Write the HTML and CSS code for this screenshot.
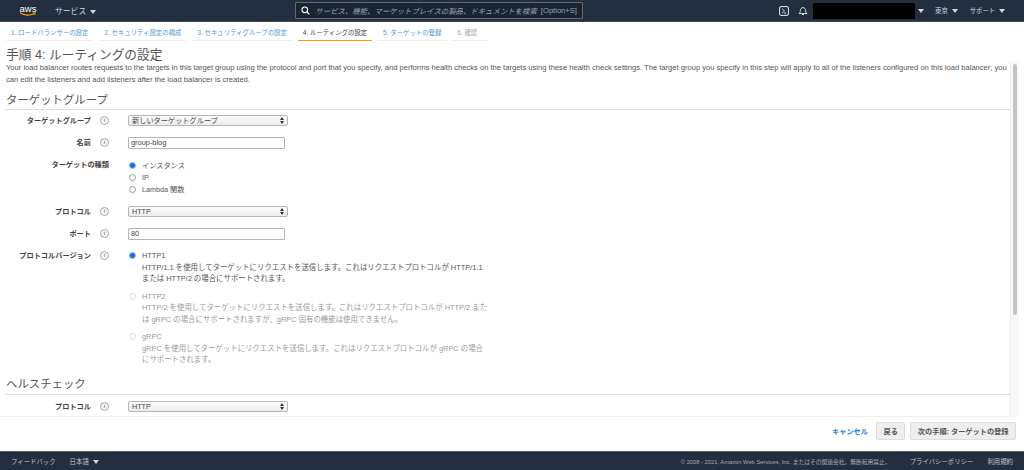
FILE: index.html
```html
<!DOCTYPE html>
<html lang="ja">
<head>
  <meta charset="UTF-8">
  <title>手順 4: ルーティングの設定</title>
  <link rel="stylesheet" href="styles.css">
</head>
<body>
  <header class="topbar">
    <div class="logo">
      <span class="logo-text">aws</span>
      <svg class="logo-smile" width="18" height="5" viewBox="0 0 18 5"><path d="M1 .8C5 3.6 11 3.9 15.6 1.4" fill="none" stroke="#f90" stroke-width="1.1"/><path d="M13.8 .8l2.6-.2-.8 2.4" fill="none" stroke="#f90" stroke-width=".9"/></svg>
    </div>
    <span class="nav-item services">サービス <i class="caret"></i></span>
    <div class="search">
      <svg width="9" height="9" viewBox="0 0 9 9"><circle cx="3.8" cy="3.8" r="2.8" fill="none" stroke="#fff" stroke-width="1.1"/><path d="M6 6l2.4 2.4" stroke="#fff" stroke-width="1.2"/></svg>
      <em>サービス、機能、マーケットプレイスの製品、ドキュメントを検索</em>
      <span>[Option+S]</span>
    </div>
    <div class="top-right">
      <svg class="shell" width="10" height="10" viewBox="0 0 10 10"><rect x=".6" y=".6" width="8.8" height="8.8" rx="1.4" fill="none" stroke="#e6e9ec" stroke-width="1"/><path d="M3 2.8L5.6 5 3 7.2M5 7.2h2.2" fill="none" stroke="#e6e9ec" stroke-width=".9"/></svg>
      <svg class="bell" width="10" height="10" viewBox="0 0 10 10"><path d="M1 7.6c1.2-.9 1.3-2 1.4-3.2C2.5 2.8 3.5 1.6 5 1.6s2.500 1.200 2.600 2.800c.1 1.200.2 2.300 1.400 3.200z" fill="none" stroke="#e6e9ec" stroke-width=".9"/><path d="M4 8.600h2" stroke="#e6e9ec" stroke-width="1"/></svg>
      <div class="account"></div>
      <i class="caret account-caret"></i>
      <span class="nav-item small region">東京 <i class="caret"></i></span>
      <span class="nav-item small">サポート <i class="caret"></i></span>
    </div>
  </header>

  <nav class="steps">
    <a class="step">1. ロードバランサーの設定</a>
    <a class="step">2. セキュリティ設定の構成</a>
    <a class="step">3. セキュリティグループの設定</a>
    <a class="step active">4. ルーティングの設定</a>
    <a class="step">5. ターゲットの登録</a>
    <a class="step disabled">6. 確認</a>
  </nav>

  <h1 class="page-title">手順 4: ルーティングの設定</h1>

  <div class="work-area">
    <main class="content">
      <p class="intro">Your load balancer routes requests to the targets in this target group using the protocol and port that you specify, and performs health checks on the targets using these health check settings. The target group you specify in this step will apply to all of the listeners configured on this load balancer; you can edit the listeners and add listeners after the load balancer is created.</p>

      <h2 class="section-title">ターゲットグループ</h2>

      <div class="row row-first">
        <label class="row-label">ターゲットグループ</label><span class="info">i</span>
        <div class="select">新しいターゲットグループ<i class="updown"></i></div>
      </div>
      <div class="row row-name">
        <label class="row-label">名前</label><span class="info">i</span>
        <div class="text-input">group-blog</div>
      </div>
      <div class="row row-types">
        <label class="row-label">ターゲットの種類</label>
        <div class="radios">
          <div class="radio-line"><i class="radio on"></i>インスタンス</div>
          <div class="radio-line"><i class="radio"></i>IP</div>
          <div class="radio-line"><i class="radio"></i>Lambda 関数</div>
        </div>
      </div>
      <div class="row row-protocol">
        <label class="row-label">プロトコル</label><span class="info">i</span>
        <div class="select">HTTP<i class="updown"></i></div>
      </div>
      <div class="row row-port">
        <label class="row-label">ポート</label><span class="info">i</span>
        <div class="text-input">80</div>
      </div>
      <div class="row row-version">
        <label class="row-label">プロトコルバージョン</label><span class="info">i</span>
        <div class="versions">
          <div class="version">
            <i class="radio on"></i>
            <div class="version-text">HTTP1<br>HTTP/1.1 を使用してターゲットにリクエストを送信します。これはリクエストプロトコルが HTTP/1.1<br>または HTTP/2 の場合にサポートされます。</div>
          </div>
          <div class="version off">
            <i class="radio"></i>
            <div class="version-text">HTTP2<br>HTTP/2 を使用してターゲットにリクエストを送信します。これはリクエストプロトコルが HTTP/2 また<br>は gRPC の場合にサポートされますが、gRPC 固有の機能は使用できません。</div>
          </div>
          <div class="version off">
            <i class="radio"></i>
            <div class="version-text">gRPC<br>gRPC を使用してターゲットにリクエストを送信します。これはリクエストプロトコルが gRPC の場合<br>にサポートされます。</div>
          </div>
        </div>
      </div>

      <h2 class="section-title health">ヘルスチェック</h2>

      <div class="row row-last">
        <label class="row-label">プロトコル</label><span class="info">i</span>
        <div class="select">HTTP<i class="updown"></i></div>
      </div>
    </main>
    <div class="scroll-track"><div class="scroll-thumb"></div></div>
  </div>

  <div class="actions">
    <a class="cancel">キャンセル</a>
    <button class="btn">戻る</button>
    <button class="btn">次の手順: ターゲットの登録</button>
  </div>

  <footer class="footer">
    <span class="footer-link">フィードバック</span>
    <span class="footer-link lang">日本語 <i class="caret"></i></span>
    <span class="copyright">© 2008 - 2021, Amazon Web Services, Inc. またはその関連会社。無断転用禁止。</span>
    <span class="footer-link privacy">プライバシーポリシー</span>
    <span class="footer-link terms">利用規約</span>
  </footer>
</body>
</html>
```

FILE: styles.css
```css
* {
  box-sizing: border-box;
}
html, body {
  height: 100%;
}
body {
  margin: 0;
  height: 470px;
  overflow: hidden;
  display: flex;
  flex-direction: column;
  background: #fff;
  color: #555;
  font-family: "Liberation Sans", "Noto Sans CJK JP", sans-serif;
  font-size: 7.2px;
}

/* top bar */
.topbar {
  height: 22px;
  flex: none;
  display: flex;
  align-items: center;
  background: #232f3e;
  border-bottom: 1px solid #3b4754;
  color: #d5d9dd;
}
.logo {
  width: 18px;
  margin-left: 19px;
  display: flex;
  flex-direction: column;
  align-items: center;
}
.logo-text {
  font-size: 9.5px;
  line-height: 7px;
  color: #fff;
}
.logo-smile {
  display: block;
}
.nav-item {
  font-size: 7.8px;
  white-space: nowrap;
}
.nav-item.small {
  font-size: 6.4px;
}
.services {
  margin-left: 18px;
}
.caret {
  display: inline-block;
  width: 0;
  height: 0;
  margin-left: 2px;
  border-left: 3px solid transparent;
  border-right: 3px solid transparent;
  border-top: 4px solid #d5d9dd;
  vertical-align: 0;
}
.search {
  width: 288px;
  height: 17px;
  margin-left: 199px;
  padding-left: 5px;
  display: flex;
  align-items: center;
  gap: 5px;
  border: 1px solid #5f6b78;
  border-radius: 1px;
  background: #1b2532;
  color: #9aa3ad;
  font-size: 7.4px;
  white-space: nowrap;
}
.search em {
  font-style: italic;
}
.search span {
  margin-left: -1px;
  font-size: 7.6px;
}
.top-right {
  margin-left: auto;
  display: flex;
  align-items: center;
}
.shell {
  margin-right: 9px;
}
.bell {
  margin-right: 5px;
}
.account {
  width: 102px;
  height: 16px;
  background: #000;
}
.account-caret {
  margin-left: 3px;
}
.region {
  margin-left: 11px;
}
.region .caret {
  margin-left: 2px;
}
.region + .nav-item {
  margin-left: 12px;
  margin-right: 19px;
}

/* wizard steps */
.steps {
  height: 19px;
  flex: none;
  display: flex;
  gap: 6px;
  padding-left: 6px;
  align-items: stretch;
  font-size: 6.4px;
  color: #4a9ad4;
}
.step {
  padding: 5px 5px 0;
  line-height: 11px;
  border-bottom: 1px solid #eee;
  white-space: nowrap;
}
.step.active {
  color: #444;
  border-bottom: 1px solid #f90;
}
.step.disabled {
  padding-right: 12px;
  color: #aaa;
}

.page-title {
  flex: none;
  margin: 7px 0 0 6px;
  height: 14px;
  font-size: 12.7px;
  line-height: 15px;
  font-weight: normal;
  color: #555;
}

/* scrolling region */
.work-area {
  flex: 1;
  min-height: 0;
  display: flex;
  padding-right: 5px;
}
.content {
  flex: 1;
  min-width: 0;
  padding-left: 5px;
  overflow: hidden;
  border-bottom: 1px solid #f0f0f0;
}
.intro {
  margin: 0;
  padding: 0 2px 0 1px;
  line-height: 11.5px;
  font-size: 7.585px;
}
.section-title {
  margin: 8px 0 0;
  padding: 0 0 0 1px;
  height: 17px;
  line-height: 15px;
  font-size: 11.4px;
  font-weight: normal;
  color: #555;
  border-bottom: 1px solid #ddd;
}
.section-title.health {
  margin-top: 11.5px;
  height: 18px;
}
.row {
  display: flex;
  align-items: flex-start;
}
.row-first { margin-top: 5px; }
.row-name { margin-top: 11px; }
.row-types { margin-top: 10px; }
.row-protocol { margin-top: 11px; }
.row-port { margin-top: 11px; }
.row-version { margin-top: 10px; }
.row-last { margin-top: 6px; }
.row-label {
  width: 86px;
  line-height: 11px;
  text-align: right;
  font-weight: bold;
  font-size: 7.2px;
  color: #444;
  white-space: nowrap;
}
.row-types .row-label {
  width: 104px;
}
.info {
  width: 9px;
  height: 9px;
  margin: 1px 0 0 9px;
  border: 1px solid #aaa;
  border-radius: 50%;
  background: #f5f5f5;
  text-align: center;
  font-size: 6px;
  line-height: 7px;
  color: #555;
  flex: none;
}
.radios {
  margin-left: 20px;
}
.select {
  position: relative;
  width: 160px;
  height: 11px;
  margin-left: 19px;
  padding-left: 3px;
  line-height: 10px;
  font-size: 7.2px;
  color: #444;
  border: 1px solid #b5b5b5;
  border-radius: 2px;
  background: linear-gradient(#fcfcfc, #ececec);
}
.updown {
  position: absolute;
  right: 3px;
  top: 1px;
  width: 0;
  height: 0;
  border-left: 2px solid transparent;
  border-right: 2px solid transparent;
  border-bottom: 3px solid #333;
}
.updown::after {
  content: "";
  position: absolute;
  left: -2px;
  top: 4px;
  border-left: 2px solid transparent;
  border-right: 2px solid transparent;
  border-top: 3px solid #333;
}
.text-input {
  width: 157px;
  height: 12px;
  margin-left: 19px;
  padding-left: 2px;
  line-height: 10px;
  font-size: 7.4px;
  color: #444;
  border: 1px solid #b5b5b5;
  border-radius: 1px;
}
.radio-line {
  display: flex;
  align-items: center;
  height: 12px;
  font-size: 7.2px;
}
.radio {
  display: block;
  width: 7px;
  height: 7px;
  margin: 0 6px 0 0;
  flex: none;
  border: 1px solid #999;
  border-radius: 50%;
  background: #fff;
}
.radio.on {
  border: 1px solid #8fbcf0;
  background: #1a6fe0;
}
.versions {
  margin-left: 20px;
  display: flex;
  flex-direction: column;
  gap: 6px;
  width: 370px;
}
.version {
  display: flex;
  align-items: flex-start;
}
.version .radio {
  margin-top: 2px;
}
.version-text {
  line-height: 11.5px;
  font-size: 7.42px;
  white-space: nowrap;
}
.version.off .version-text {
  color: #9a9a9a;
}
.version.off .radio {
  border-color: #ddd;
}
.scroll-track {
  width: 9px;
  flex: none;
  padding: 2px 2px 0;
  background: #f8f8f8;
  border-left: 1px solid #eee;
}
.scroll-thumb {
  height: 251px;
  border-radius: 3px;
  background: #c2c2c2;
}

/* bottom buttons */
.actions {
  height: 34px;
  flex: none;
  display: flex;
  justify-content: flex-end;
  align-items: center;
  padding: 0 8px 6px 0;
}
.cancel {
  margin-right: 3px;
  font-size: 7.2px;
  font-weight: bold;
  color: #2a84d8;
}
.btn {
  height: 18px;
  margin-left: 5px;
  padding: 0 6.5px;
  font-family: inherit;
  font-size: 7.2px;
  font-weight: bold;
  color: #555;
  background: #eee;
  border: 1px solid #ddd;
  border-radius: 2px;
}

/* footer */
.footer {
  height: 19px;
  flex: none;
  display: flex;
  align-items: center;
  padding: 0 11px;
  background: #232f3e;
  border-top: 1px solid #55606b;
  color: #c0c5cb;
  font-size: 6.4px;
}
.lang {
  margin-left: 14px;
}
.copyright {
  margin-left: auto;
  font-size: 5.77px;
  color: #a5acb4;
}
.privacy {
  margin-left: 19px;
}
.terms {
  margin-left: 14px;
}
```
